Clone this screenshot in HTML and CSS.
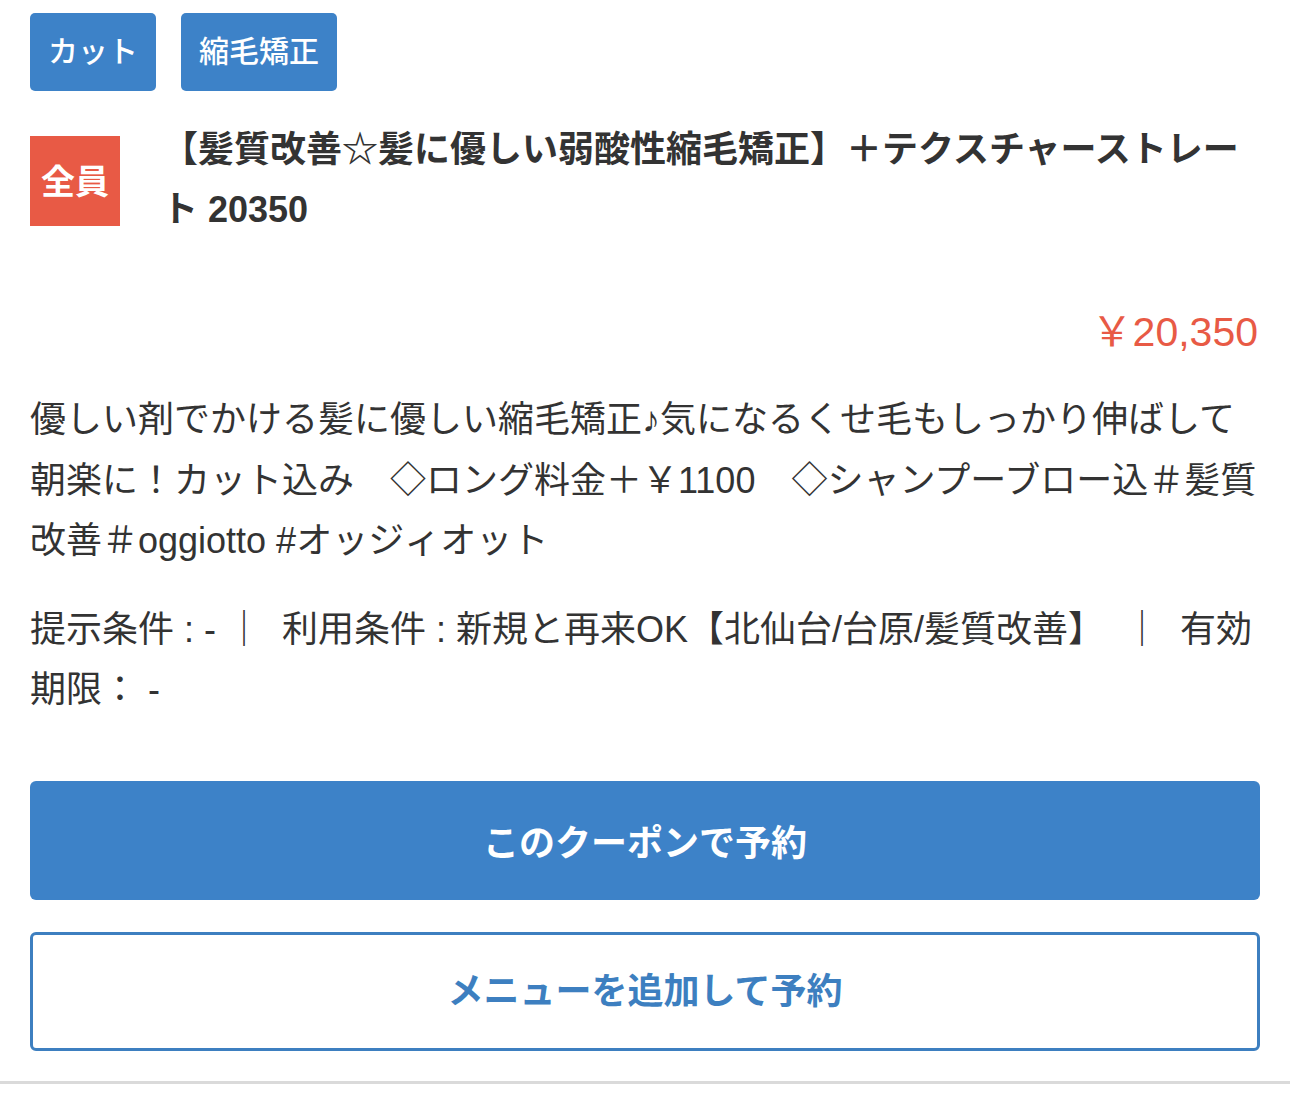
FILE: index.html
```html
<!DOCTYPE html>
<html lang="ja">
<head>
    <meta charset="UTF-8">
    <meta name="viewport" content="width=device-width, initial-scale=1.0">
    <title>クーポン</title>
    <link rel="stylesheet" href="styles.css">
</head>
<body>
    <section class="coupon">
        <div class="coupon-inner">
            <ul class="tags">
                <li class="tag">カット</li>
                <li class="tag">縮毛矯正</li>
            </ul>

            <div class="coupon-head">
                <span class="badge">全員</span>
                <h2 class="coupon-title">【髪質改善☆髪に優しい弱酸性縮毛矯正】＋テクスチャーストレート 20350</h2>
            </div>

            <p class="price">￥20,350</p>

            <p class="description">優しい剤でかける髪に優しい縮毛矯正♪気になるくせ毛もしっかり伸ばして朝楽に！カット込み　◇ロング料金＋￥1100　◇シャンプーブロー込＃髪質改善＃oggiotto #オッジィオット</p>

            <p class="conditions">提示条件 : - ｜&nbsp; 利用条件 : 新規と再来OK【北仙台/台原/髪質改善】&nbsp; ｜&nbsp; 有効期限： -</p>

            <div class="actions">
                <a href="#" class="btn btn-primary">このクーポンで予約</a>
                <a href="#" class="btn btn-outline">メニューを追加して予約</a>
            </div>
        </div>
    </section>
</body>
</html>
```

FILE: styles.css
```css
* {
    margin: 0;
    padding: 0;
    box-sizing: border-box;
}

body {
    background: #fff;
    color: #333;
    font-family: 'Liberation Sans', 'Noto Sans CJK JP', sans-serif;
}

.coupon {
    border-bottom: 3px solid #dadada;
    padding: 13px 30px 30px;
}

.tags {
    list-style: none;
    display: flex;
    gap: 25px;
}

.tag {
    background: #3d82c8;
    color: #fff;
    font-size: 30px;
    font-weight: 500;
    height: 78px;
    padding: 0 18px 6px;
    border-radius: 5px;
    display: flex;
    align-items: center;
}

.coupon-head {
    display: flex;
    align-items: center;
    gap: 42px;
    margin-top: 29px;
}

.badge {
    flex: none;
    width: 90px;
    height: 90px;
    background: #e85a45;
    color: #fff;
    font-size: 34px;
    font-weight: 700;
    display: flex;
    align-items: center;
    justify-content: center;
    padding-bottom: 3px;
    margin-top: 2px;
}

.coupon-title {
    font-size: 36px;
    font-weight: 700;
    line-height: 60px;
    color: #333;
}

.price {
    text-align: right;
    color: #e85a45;
    font-size: 41px;
    line-height: 60px;
    margin-top: 62px;
    padding-right: 2px;
}

.description,
.conditions {
    font-size: 36px;
    line-height: 60.5px;
    color: #333;
}

.description {
    margin-top: 28px;
}

.conditions {
    margin-top: 28px;
}

.actions {
    display: flex;
    flex-direction: column;
    gap: 32px;
    margin-top: 60px;
}

.btn {
    display: flex;
    align-items: center;
    justify-content: center;
    height: 119px;
    border-radius: 6px;
    font-size: 36px;
    font-weight: 700;
    text-decoration: none;
}

.btn-primary {
    background: #3d82c8;
    color: #fff;
}

.btn-outline {
    border: 3px solid #3d7fc0;
    color: #3d7fc0;
    padding-bottom: 6px;
}
```
